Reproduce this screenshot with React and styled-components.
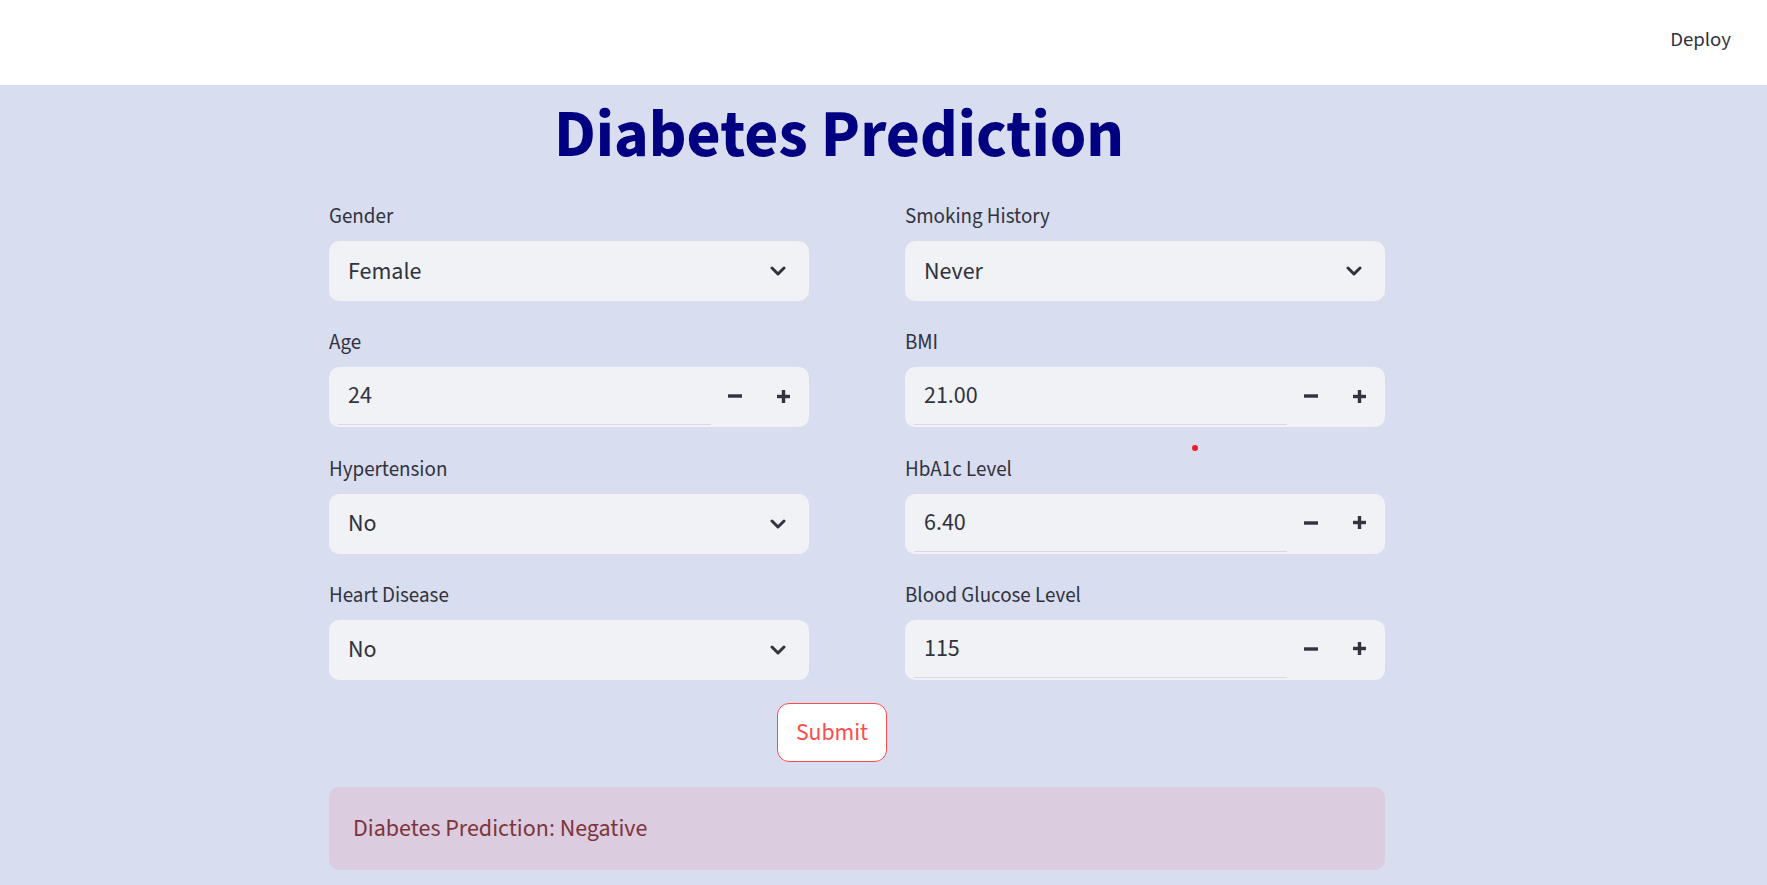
import React from 'react'
import styled, { createGlobalStyle } from 'styled-components'

const GlobalStyle = createGlobalStyle`
  html, body {
    margin: 0;
    padding: 0;
    background: #d9ddf0;
    font-family: 'Source Sans 3', 'Source Sans Pro', Lato, 'Noto Sans', sans-serif;
    color: #31333f;
  }
  * {
    box-sizing: border-box;
  }
`

const Header = styled.header`
  height: 85px;
  background: #ffffff;
  display: flex;
  align-items: center;
  justify-content: flex-end;
  padding: 0 36px 6px 0;
`

const DeployButton = styled.span`
  font-size: 20.8px;
  color: #31333f;
`

const Main = styled.main`
  position: relative;
  width: 1056px;
  margin-left: 329px;
  padding-top: 11px;
`

const Title = styled.h1`
  margin: 0 0 30px;
  padding-right: 36px;
  text-align: center;
  font-size: 66px;
  line-height: 78px;
  font-weight: 700;
  color: #000080;
`

const FormGrid = styled.div`
  display: grid;
  grid-template-columns: 480px 480px;
  column-gap: 96px;
  row-gap: 29.3px;
`

const Field = styled.div`
  display: flex;
  flex-direction: column;
`

const Label = styled.label`
  font-size: 21px;
  line-height: 24px;
  margin-bottom: 13px;
  color: #31333f;
`

const Box = styled.div`
  height: 60px;
  background: #f0f2f6;
  border-radius: 10px;
  display: flex;
  align-items: stretch;
  overflow: hidden;
`

const SelectValue = styled.div`
  flex: 1;
  display: flex;
  align-items: center;
  padding-left: 19px;
  font-size: 24px;
`

const Chevron = styled.div`
  width: 62px;
  display: flex;
  align-items: center;
  justify-content: center;
`

const NumberValue = styled.div`
  flex: 1;
  display: flex;
  align-items: center;
  margin: 0 0 2px 9px;
  padding-left: 10px;
  font-size: 24px;
  border-bottom: 1px solid #d7d9e6;
`

const Steppers = styled.div`
  display: flex;
  padding-right: 2px;
`

const StepButton = styled.div`
  width: 48px;
  display: flex;
  align-items: center;
  justify-content: center;
  padding-bottom: 2px;
`

const SubmitRow = styled.div`
  padding: 23.5px 0 25px 448px;
`

const SubmitButton = styled.button`
  width: 110px;
  height: 59px;
  background: #ffffff;
  border: 1px solid #ff4b4b;
  border-radius: 12px;
  color: #ff4b4b;
  font-family: inherit;
  font-size: 23.7px;
  cursor: pointer;
`

const Alert = styled.div`
  height: 83px;
  background: #dccce0;
  border-radius: 10px;
  display: flex;
  align-items: center;
  padding-left: 24px;
  color: #7d353b;
  font-size: 24px;
`

const Dot = styled.span`
  position: absolute;
  left: 863px;
  top: 360px;
  width: 6px;
  height: 6px;
  border-radius: 50%;
  background: #ee1c24;
`

const ChevronIcon = () => (
  <svg width='16' height='10' viewBox='0 0 16 10'>
    <polyline points='2,2 8,8 14,2' fill='none' stroke='#31333f' strokeWidth='3' strokeLinecap='round' strokeLinejoin='round' />
  </svg>
)

const MinusIcon = () => (
  <svg width='14' height='14' viewBox='0 0 14 14'>
    <rect x='0' y='5.3' width='14' height='3.4' fill='#31333f' />
  </svg>
)

const PlusIcon = () => (
  <svg width='13' height='13' viewBox='0 0 13 13'>
    <rect x='0' y='4.8' width='13' height='3.4' fill='#31333f' />
    <rect x='4.8' y='0' width='3.4' height='13' fill='#31333f' />
  </svg>
)

const fields = [
  { label: 'Gender', type: 'select', value: 'Female' },
  { label: 'Smoking History', type: 'select', value: 'Never' },
  { label: 'Age', type: 'number', value: '24' },
  { label: 'BMI', type: 'number', value: '21.00' },
  { label: 'Hypertension', type: 'select', value: 'No' },
  { label: 'HbA1c Level', type: 'number', value: '6.40' },
  { label: 'Heart Disease', type: 'select', value: 'No' },
  { label: 'Blood Glucose Level', type: 'number', value: '115' },
]

const InputField = ({ label, type, value }) => (
  <Field>
    <Label>{label}</Label>
    <Box>
      {type === 'select' ? (
        <>
          <SelectValue>{value}</SelectValue>
          <Chevron>
            <ChevronIcon />
          </Chevron>
        </>
      ) : (
        <>
          <NumberValue>{value}</NumberValue>
          <Steppers>
            <StepButton>
              <MinusIcon />
            </StepButton>
            <StepButton>
              <PlusIcon />
            </StepButton>
          </Steppers>
        </>
      )}
    </Box>
  </Field>
)

const App = () => {
  return (
    <>
      <GlobalStyle />
      <Header>
        <DeployButton>Deploy</DeployButton>
      </Header>
      <Main>
        <Title>Diabetes Prediction</Title>
        <FormGrid>
          {fields.map((f) => (
            <InputField key={f.label} {...f} />
          ))}
        </FormGrid>
        <SubmitRow>
          <SubmitButton>Submit</SubmitButton>
        </SubmitRow>
        <Alert>Diabetes Prediction: Negative</Alert>
        <Dot />
      </Main>
    </>
  )
}

export default App
